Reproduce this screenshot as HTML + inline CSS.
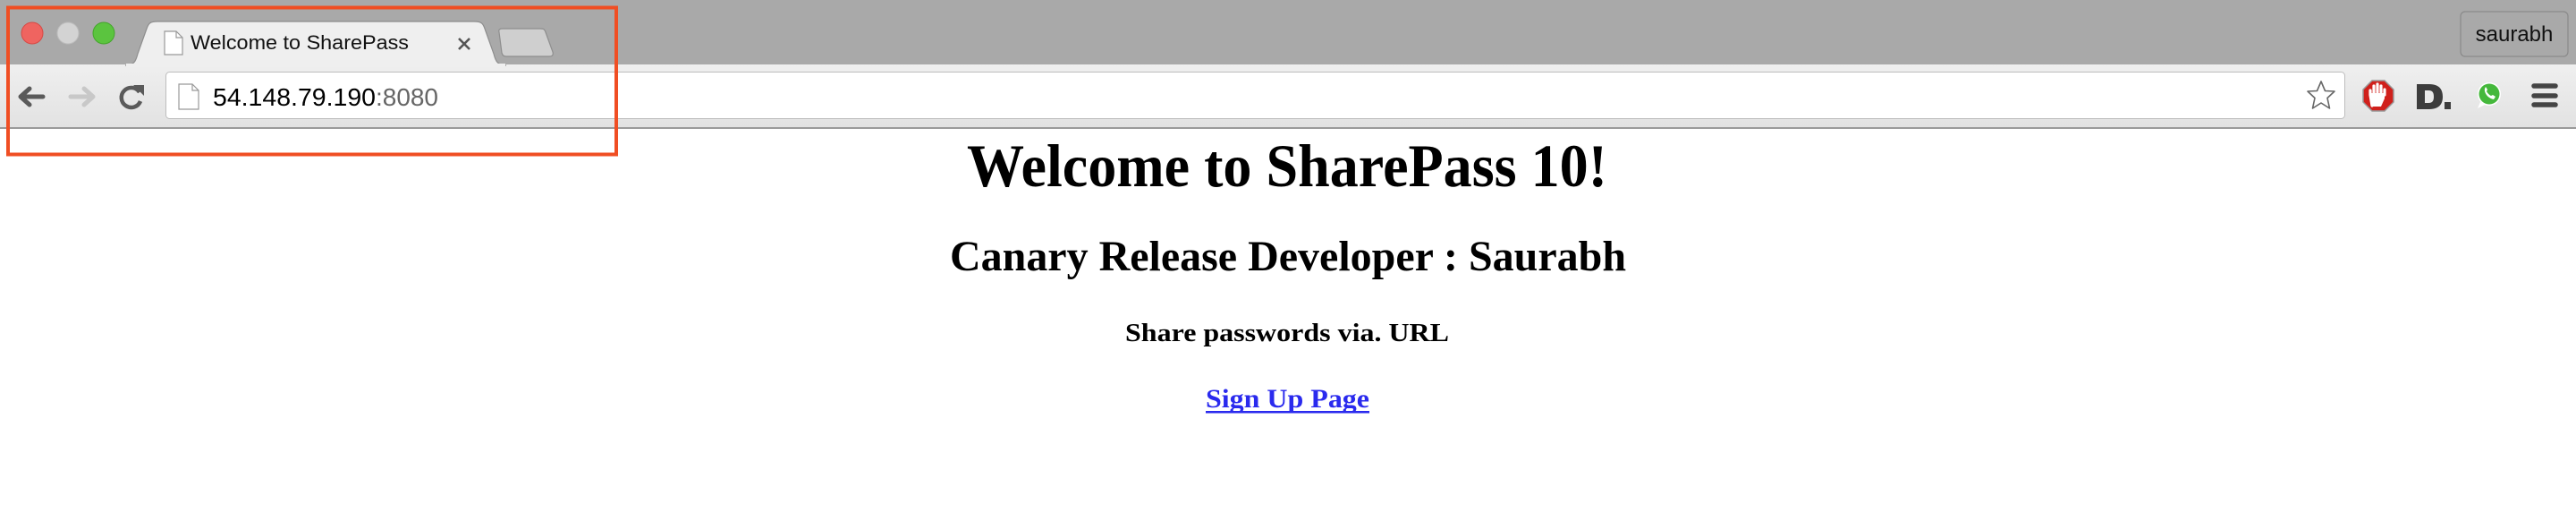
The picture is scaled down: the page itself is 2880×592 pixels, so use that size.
<!DOCTYPE html>
<html><head><meta charset="utf-8"><style>
html,body{margin:0;padding:0;width:2880px;height:592px;overflow:hidden;background:#fff;font-family:"Liberation Sans",sans-serif}
</style></head><body>
<svg width="2880" height="592" xmlns="http://www.w3.org/2000/svg" style="position:absolute;left:0;top:0">
<defs>
<linearGradient id="tb" x1="0" y1="0" x2="0" y2="1"><stop offset="0" stop-color="#efefef"/><stop offset="1" stop-color="#e2e2e2"/></linearGradient>
</defs>
<rect x="0" y="0" width="2880" height="72" fill="#a9a9a9"/>
<rect x="0" y="72" width="2880" height="71" fill="url(#tb)"/>
<rect x="0" y="142" width="2880" height="2" fill="#9a9a9a"/>
<!-- traffic lights -->
<circle cx="36" cy="37" r="12" fill="#ef6460" stroke="#d64a45" stroke-width="1"/>
<circle cx="76" cy="37" r="12" fill="#d3d3d3" stroke="#bcbcbc" stroke-width="1"/>
<circle cx="116" cy="37" r="12" fill="#5bc43f" stroke="#44a52c" stroke-width="1"/>
<!-- tab -->
<path d="M140 73 C150 73 152 68 154 60 L164 32 C166 26 168 24 176 24 L530 24 C538 24 540 26 542 32 L552 60 C554 68 556 73 566 73 Z" fill="#efefef" stroke="#8e8e8e" stroke-width="1.2"/>
<rect x="141" y="71" width="424" height="4" fill="#efefef"/>
<path d="M184 35 L197 35 L204 42 L204 61 L184 61 Z" fill="#fff" stroke="#999" stroke-width="1.2"/>
<path d="M197 35 L197 42 L204 42" fill="none" stroke="#999" stroke-width="1.2"/>
<text x="213" y="55" font-family="Liberation Sans,sans-serif" font-size="22" fill="#111" textLength="244" lengthAdjust="spacingAndGlyphs">Welcome to SharePass</text>
<path d="M513 43 L525 55 M525 43 L513 55" stroke="#555" stroke-width="2.6"/>
<path d="M558 36 C557 33 559 32 562 32 L604 32 C608 32 609 33 610 36 L618 58 C619 62 617 63 614 63 L566 63 C563 63 562 62 561 59 Z" fill="#cfcfcf" stroke="#8e8e8e" stroke-width="1.2"/>
<!-- profile button -->
<rect x="2751" y="13" width="120" height="50" rx="5" fill="#a9a9a9" stroke="#8a8a8a" stroke-width="1.2"/>
<text x="2811" y="46" text-anchor="middle" font-family="Liberation Sans,sans-serif" font-size="24" fill="#111">saurabh</text>
<!-- nav -->
<path d="M48 108 L24 108 M33 99 L23 108 L33 117" fill="none" stroke="#5a5a5a" stroke-width="5" stroke-linecap="round" stroke-linejoin="round"/>
<path d="M79 108 L103 108 M94 99 L104 108 L94 117" fill="none" stroke="#c8c8c8" stroke-width="5" stroke-linecap="round" stroke-linejoin="round"/>
<path d="M156 103 A11 11 0 1 0 157 113" fill="none" stroke="#5a5a5a" stroke-width="4.5"/>
<path d="M149 95 L161 95 L161 107 Z" fill="#5a5a5a"/>
<!-- omnibox -->
<rect x="185.5" y="80.5" width="2436" height="52" rx="4" fill="#fff" stroke="#bdbdbd"/>
<path d="M200 94 L215 94 L222 101 L222 122 L200 122 Z" fill="#fff" stroke="#999" stroke-width="1.2"/>
<path d="M215 94 L215 101 L222 101" fill="none" stroke="#999" stroke-width="1.2"/>
<text x="238" y="118" font-family="Liberation Sans,sans-serif" font-size="28" fill="#000" textLength="182" lengthAdjust="spacingAndGlyphs">54.148.79.190</text>
<text x="420" y="118" font-family="Liberation Sans,sans-serif" font-size="28" fill="#666" textLength="70" lengthAdjust="spacingAndGlyphs">:8080</text>
<!-- star -->
<path d="M2595 91 L2599.5 101.5 L2610 102 L2602 109.5 L2604.5 121 L2595 115 L2585.5 121 L2588 109.5 L2580 102 L2590.5 101.5 Z" fill="#fff" stroke="#666" stroke-width="1.6" stroke-linejoin="round"/>
<!-- adblock -->
<polygon points="2652,90 2666,90 2676,100 2676,114 2666,124 2652,124 2642,114 2642,100" fill="#d0201b" stroke="#999" stroke-width="1.5"/>
<path d="M2652 118 L2650 106 L2650 101 M2654 104 L2654 96 M2658 103 L2658 94 M2662 103 L2662 96 M2666 106 L2666 100" stroke="#fff" stroke-width="3.2" stroke-linecap="round"/>
<path d="M2650 104 L2666 104 L2666 110 L2662 119 L2653 119 Z" fill="#fff"/>
<!-- D. -->
<path d="M2702 94 L2716 94 C2728 94 2731 101 2731 108 C2731 115 2728 122 2716 122 L2702 122 Z M2711 101 L2711 115 L2715 115 C2720 115 2721 112 2721 108 C2721 104 2720 101 2715 101 Z" fill="#3c3c3c" fill-rule="evenodd"/>
<rect x="2733" y="114" width="7" height="8" fill="#3c3c3c"/>
<!-- whatsapp -->
<circle cx="2783" cy="105" r="13" fill="#fff"/>
<circle cx="2783" cy="105" r="11.5" fill="#45b83c"/>
<path d="M2773 114 L2770 121 L2778 117 Z" fill="#fff"/>
<path d="M2778 99 C2777 104 2782 110 2788 111 L2790 108 L2787 106 L2785 107 C2783 106 2781 104 2780 102 L2781 100 L2779 97 Z" fill="#fff"/>
<!-- menu -->
<path d="M2833 96 L2857 96 M2833 107 L2857 107 M2833 117 L2857 117" stroke="#444" stroke-width="5.5" stroke-linecap="round"/>
<!-- red highlight rectangle -->
<rect x="9" y="8.5" width="680" height="164" fill="none" stroke="#f04e23" stroke-width="4"/>
<!-- page content -->
<text x="1081" y="208" font-family="Liberation Serif,serif" font-weight="bold" font-size="68" fill="#000" textLength="716" lengthAdjust="spacingAndGlyphs">Welcome to SharePass 10!</text>
<text x="1062" y="302" font-family="Liberation Serif,serif" font-weight="bold" font-size="48" fill="#000" textLength="756" lengthAdjust="spacingAndGlyphs">Canary Release Developer : Saurabh</text>
<text x="1258" y="381" font-family="Liberation Serif,serif" font-weight="bold" font-size="29" fill="#000" textLength="362" lengthAdjust="spacingAndGlyphs">Share passwords via. URL</text>
<text x="1348" y="455" font-family="Liberation Serif,serif" font-weight="bold" font-size="30" fill="#2a2aee" textLength="183" lengthAdjust="spacingAndGlyphs">Sign Up Page</text>
<rect x="1348" y="459" width="183" height="2.5" fill="#2a2aee"/>
</svg>
</body></html>
